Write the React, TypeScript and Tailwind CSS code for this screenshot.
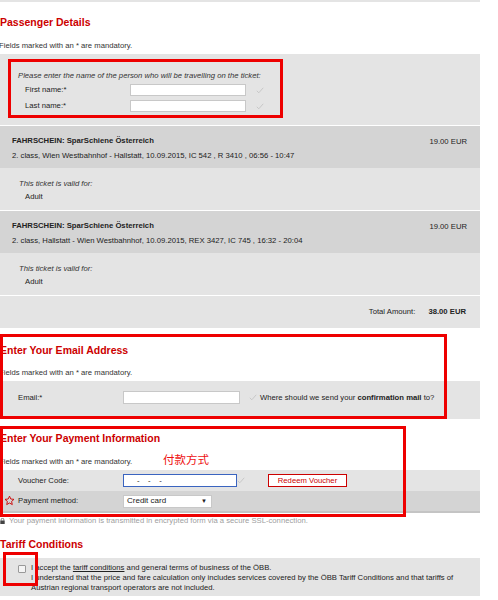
import React from "react";

const Check = () => (
  <svg width="8" height="7" viewBox="0 0 8 7">
    <path d="M0.8 3.8 L2.8 5.8 L7.2 0.8" stroke="#c4c4c4" fill="none" strokeWidth="0.9" />
  </svg>
);

const Heading = ({ children }: { children: React.ReactNode }) => (
  <div className="h-[20px] flex items-center text-[10.5px] font-bold text-[#cc0000] whitespace-nowrap">
    {children}
  </div>
);

const Mandatory = () => (
  <div className="h-[12px] flex items-center whitespace-nowrap text-[#333]">
    <span className="-ml-[1px]">Fields marked with an * are mandatory.</span>
  </div>
);

const Ticket = ({ route }: { route: string }) => (
  <div>
    <div className="h-[42px] bg-[#d4d4d4] pl-[12px] pr-[13px] pt-[10px] flex">
      <div className="flex-1">
        <div className="h-[10px] leading-[10px] font-bold text-[#222]">FAHRSCHEIN: SparSchiene Österreich</div>
        <div className="h-[10px] leading-[10px] mt-[5px] text-[#222]">{route}</div>
      </div>
      <div className="h-[10px] leading-[10px] mt-[1px] text-[#222]">19.00 EUR</div>
    </div>
    <div className="h-[42px] bg-[#e4e4e4] pt-[11px]">
      <div className="h-[10px] leading-[10px] pl-[19px] italic text-[#333]">This ticket is valid for:</div>
      <div className="h-[10px] leading-[10px] pl-[25px] mt-[3px] text-[#222]">Adult</div>
    </div>
  </div>
);

export default function App() {
  return (
    <div className="relative w-[498px] h-[600px] bg-white overflow-hidden font-['Liberation_Sans',Arial,sans-serif] text-[7.7px] text-[#222]">
      <div className="w-[480px]">
        <div className="h-[2px] bg-[#e4e4e4]" />
        <div className="mt-[11px]">
          <Heading>Passenger Details</Heading>
        </div>
        <div className="mt-[7px]">
          <Mandatory />
        </div>
        {/* passenger panel */}
        <div className="mt-[2px] h-[71px] bg-[#e4e4e4] pt-[17px]">
          <div className="h-[10px] leading-[10px] pl-[18px] italic text-[#333] whitespace-nowrap">
            Please enter the name of the person who will be travelling on the ticket:
          </div>
          <div className="mt-[3px] h-[12px] flex items-center">
            <span className="w-[130px] pl-[25px]">First name:*</span>
            <div className="w-[116px] h-[12px] bg-white border border-[#c8c8c8]" />
            <span className="ml-[10px]"><Check /></span>
          </div>
          <div className="mt-[4px] h-[12px] flex items-center">
            <span className="w-[130px] pl-[25px]">Last name:*</span>
            <div className="w-[116px] h-[12px] bg-white border border-[#c8c8c8]" />
            <span className="ml-[10px]"><Check /></span>
          </div>
        </div>
        <div className="h-[1px]" />
        <Ticket route="2. class, Wien Westbahnhof - Hallstatt, 10.09.2015, IC 542 , R 3410 , 06:56 - 10:47" />
        <div className="h-[1px]" />
        <Ticket route="2. class, Hallstatt - Wien Westbahnhof, 10.09.2015, REX 3427, IC 745 , 16:32 - 20:04" />
        <div className="h-[1px]" />
        <div className="h-[32px] bg-[#e4e4e4] flex items-center justify-end pr-[14px]">
          <span>Total Amount:</span>
          <span className="ml-[13px] font-bold">38.00 EUR</span>
        </div>

        {/* email */}
        <div className="mt-[13px]">
          <Heading>Enter Your Email Address</Heading>
        </div>
        <div className="mt-[6px]">
          <Mandatory />
        </div>
        <div className="mt-[2px] h-[38px] bg-[#e4e4e4] pt-[10px]">
          <div className="h-[13px] flex items-center">
            <span className="w-[123px] pl-[18px]">Email:*</span>
            <div className="w-[117px] h-[13px] bg-white border border-[#c8c8c8]" />
            <span className="ml-[9px]"><Check /></span>
            <span className="ml-[3px] whitespace-nowrap">
              Where should we send your <b>confirmation mail</b> to?
            </span>
          </div>
        </div>

        {/* payment */}
        <div className="mt-[10px]">
          <Heading>Enter Your Payment Information</Heading>
        </div>
        <div className="mt-[7px] relative">
          <Mandatory />
          <span className="absolute left-[163px] top-[-5px] text-[11.5px] text-[#ee1111] font-['Noto_Sans_CJK_SC',sans-serif] leading-[16px]">
            付款方式
          </span>
        </div>
        <div className="mt-[2px] h-[21px] bg-[#e4e4e4] flex items-center">
          <span className="w-[123px] pl-[18px]">Voucher Code:</span>
          <div className="w-[114px] h-[13px] bg-white border border-[#3a64c0] flex items-center pl-[13px]">
            <span>-&nbsp;&nbsp;&nbsp;&nbsp;-&nbsp;&nbsp;&nbsp;&nbsp;-</span>
          </div>
          <span><Check /></span>
          <div className="ml-[23px] w-[79px] h-[13px] bg-white border border-[#cc0000] flex items-center justify-center text-[#cc0000]">
            Redeem Voucher
          </div>
        </div>
        <div className="h-[20px] bg-[#d4d4d4] flex items-center">
          <span className="w-[123px] pl-[4px] flex items-center">
            <svg width="11" height="11" viewBox="0 0 24 24">
              <path
                d="M12 2.5 L14.9 8.8 L21.8 9.5 L16.6 14.1 L18.1 20.9 L12 17.4 L5.9 20.9 L7.4 14.1 L2.2 9.5 L9.1 8.8 Z"
                fill="none"
                stroke="#cc0000"
                strokeWidth="2"
                strokeLinejoin="round"
              />
            </svg>
            <span className="ml-[3px]">Payment method:</span>
          </span>
          <div className="w-[89px] h-[13px] bg-white border border-[#c8c8c8] flex items-center justify-between pl-[3px] pr-[4px] text-[8px]">
            <span>Credit card</span>
            <span className="text-[6px]">▼</span>
          </div>
        </div>
        <div className="h-[2px] bg-[#c4c4c4]" />
        <div className="mt-[2px] h-[12px] flex items-center whitespace-nowrap text-[#a0a0a0]">
          <svg width="5" height="6" viewBox="0 0 5 6" className="mr-[4px]">
            <rect x="0.3" y="2.5" width="4.4" height="3.5" fill="#444" />
            <path d="M1.2 2.6 V1.6 A1.3 1.3 0 0 1 3.8 1.6 V2.6" stroke="#444" strokeWidth="0.7" fill="none" />
          </svg>
          <span>Your payment information is transmitted in encrypted form via a secure SSL-connection.</span>
        </div>

        {/* tariff */}
        <div className="mt-[8px]">
          <Heading>Tariff Conditions</Heading>
        </div>
        <div className="mt-[3px] h-[38px] bg-[#e4e4e4] flex pt-[5px]">
          <div className="w-[31px] pl-[18px] pt-[2px]">
            <div className="w-[8px] h-[8px] border border-[#999] rounded-[1px] bg-[#f4f4f4]" />
          </div>
          <div className="leading-[10px] text-[#222]">
            <div>
              I accept the <span className="underline">tariff conditions</span> and general terms of business of the ÖBB.
            </div>
            <div>
              I understand that the price and fare calculation only includes services covered by the ÖBB Tariff Conditions and that tariffs of
            </div>
            <div>Austrian regional transport operators are not included.</div>
          </div>
        </div>
      </div>

      {/* annotation overlays */}
      <div className="absolute left-[8px] top-[59px] w-[275px] h-[59px] border-[3px] border-[#ee0000]" />
      <div className="absolute left-[0px] top-[334px] w-[447px] h-[85px] border-[3px] border-[#ee0000]" />
      <div className="absolute left-[0px] top-[426px] w-[406px] h-[91px] border-[3px] border-[#ee0000]" />
      <div className="absolute left-[3px] top-[552px] w-[35px] h-[34px] border-[3px] border-[#ee0000]" />
    </div>
  );
}
